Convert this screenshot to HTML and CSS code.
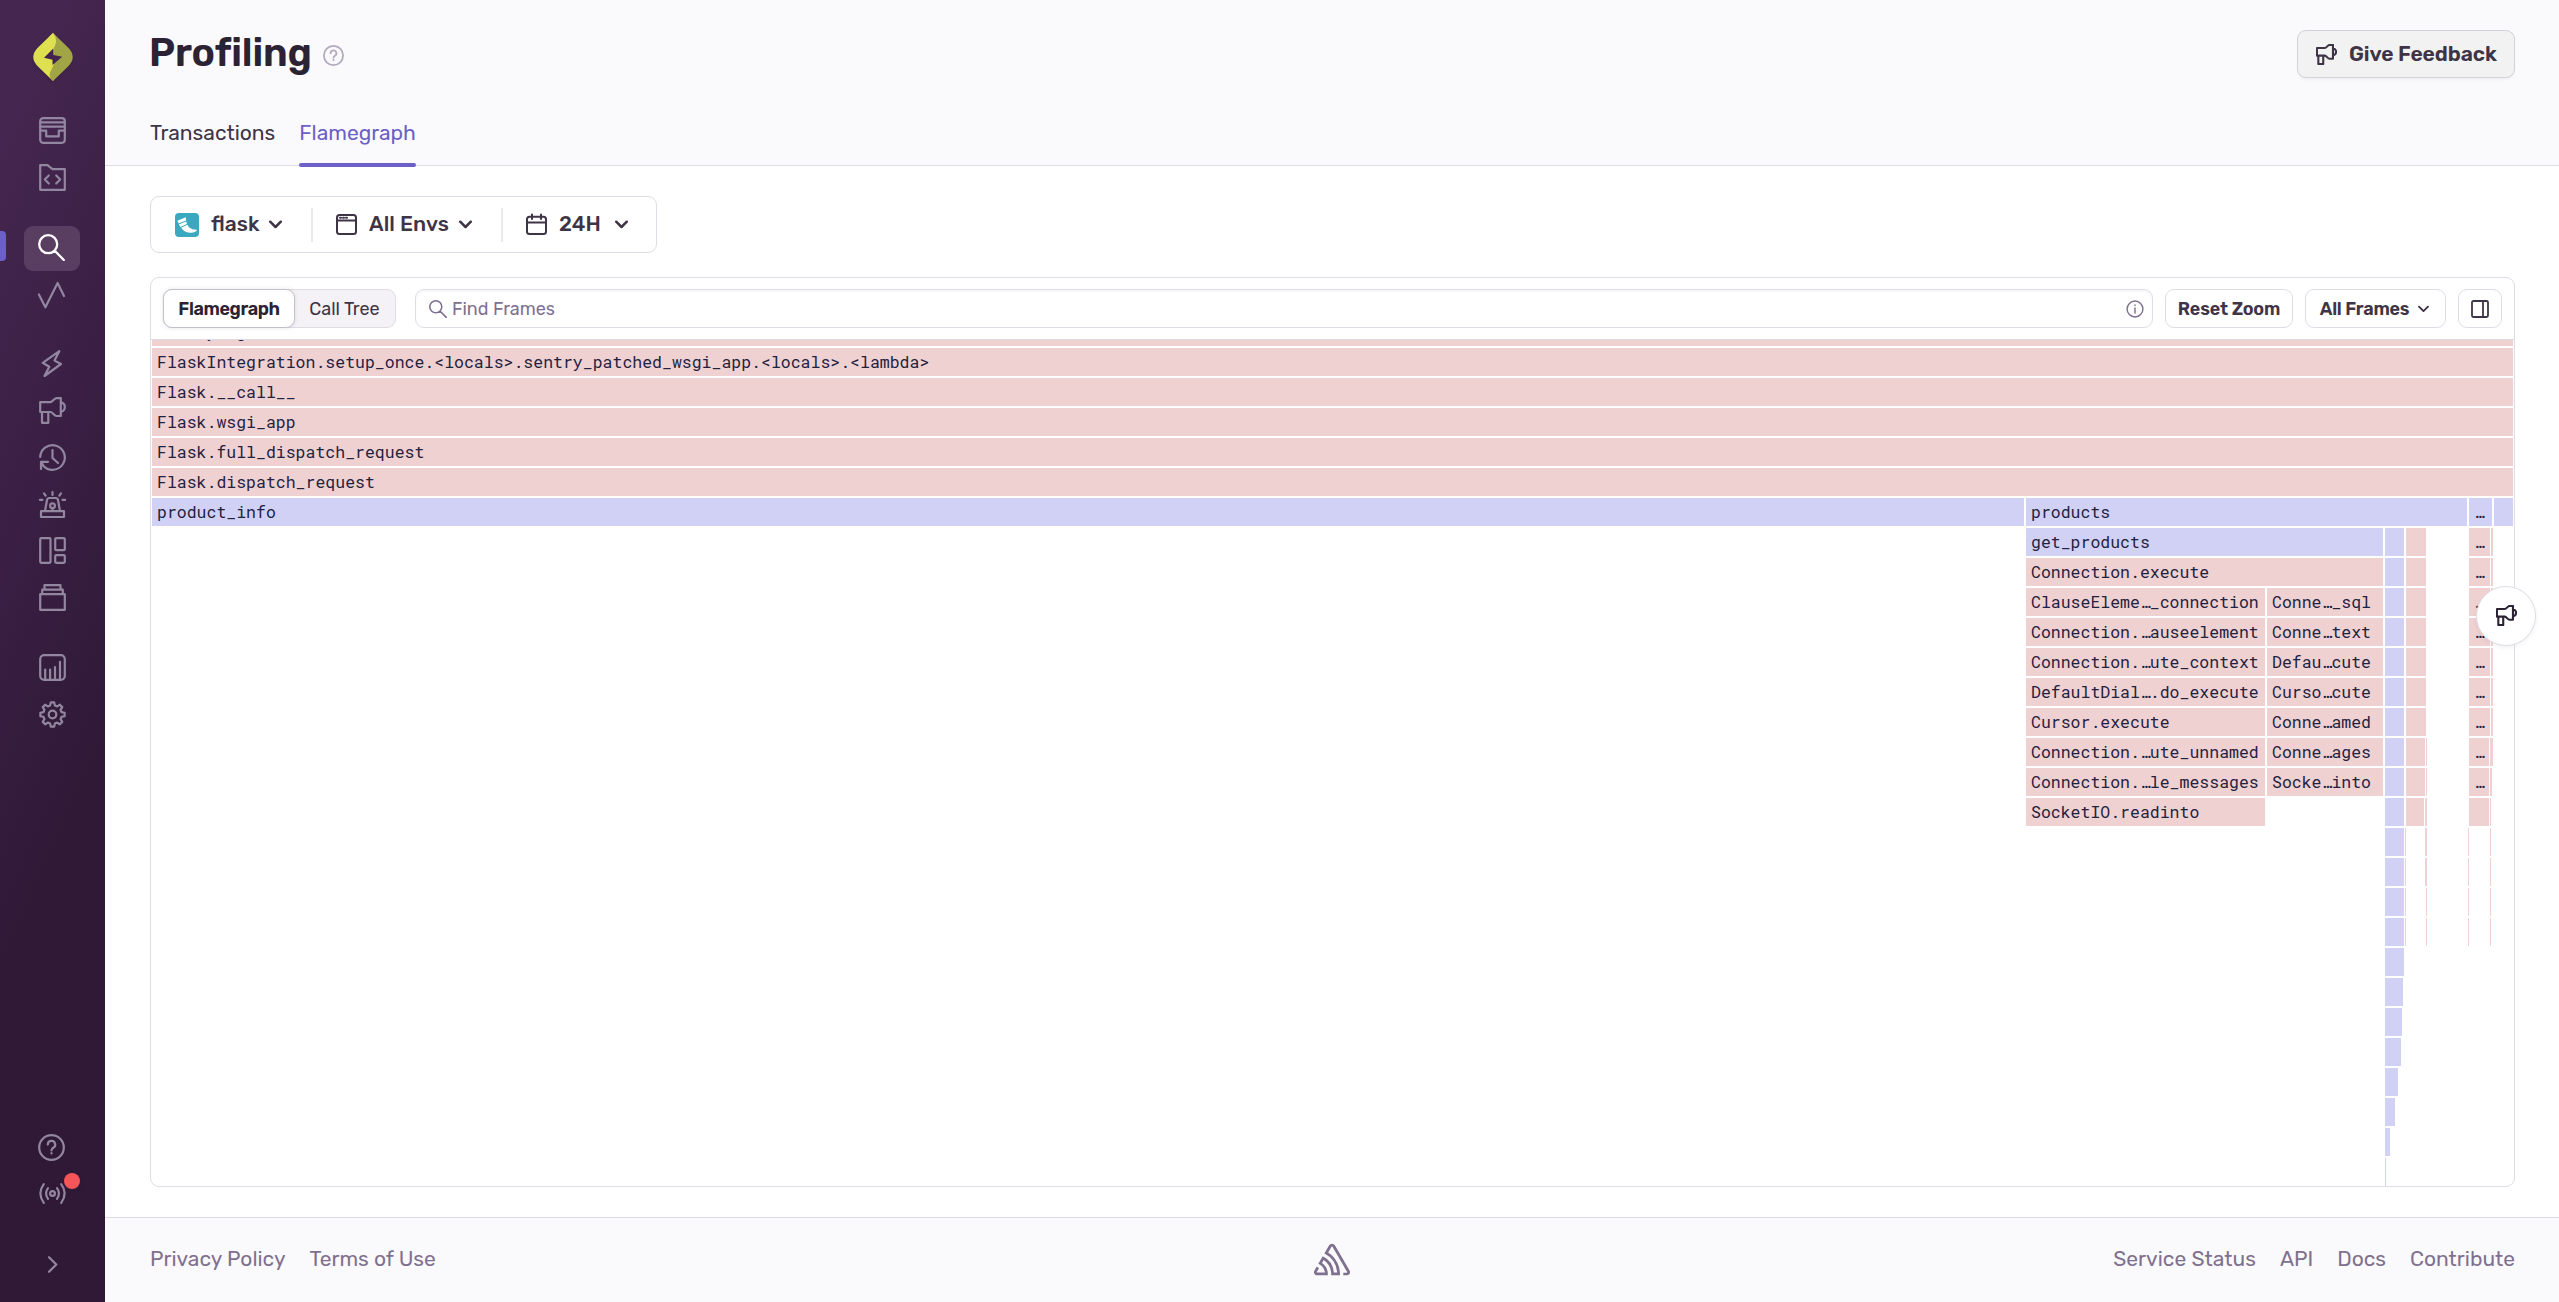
FILE: index.html
```html
<!DOCTYPE html>
<html lang="en">
<head>
<meta charset="utf-8">
<title>Profiling</title>
<link rel="stylesheet" href="styles.css">
</head>
<body>
<svg class="defs" aria-hidden="true">
  <symbol id="megaphone" viewBox="0 0 27 27"><path d="M1.2 5.2H11.5C13.5 5.2 15 1.2 17.5 1.2H21.8V19H17.5C15 19 13.5 15 11.5 15H1.2ZM3 15V25.8H9.3V15M22 5.4a4.8 4.8 0 0 1 0 9.4"/></symbol>
  <symbol id="search" viewBox="0 0 27 27"><path d="M19.2 10.2a9 9 0 1 1-18 0a9 9 0 0 1 18 0ZM16.8 16.8 25.8 26"/></symbol>
  <symbol id="question" viewBox="0 0 27 27"><circle cx="13.5" cy="13.5" r="12.3"/><path d="M9.8 10.6a3.7 3.7 0 1 1 5.5 3.2c-1.3.8-1.8 1.3-1.8 2.7M13.5 19.2v.3"/></symbol>
  <symbol id="chevron" viewBox="0 0 14 9"><path d="M1.3 1.5 7 7.2l5.700-5.700"/></symbol>
</svg>
<nav class="sidebar">
  <svg class="logo" viewBox="0 0 40 48"><path fill="#dfe04f" d="M20 0 6 13.500Q-5.500 24 6 34.500L20 48l2-4 8-10V12Z"/><path fill="#a1a546" d="M20 0 34 13.500Q45.500 24 34 34.500L20 48Q14 43 18.500 36.500L21 31 20 16Q25 10 20 0Z"/><path fill="#dfe04f" d="M20 0Q26 7 20 16L14 16 16 4Z"/><path fill="#42244d" d="M20 15.700 11 24.700 19.500 26.700V32L29.200 23.800 20.500 22Z"/></svg>
  <div class="group g1">
    <a class="item"><svg viewBox="0 0 27 27"><rect x="1.200" y="1.200" width="24.600" height="24.600" rx="3"/><path d="M1.200 5.400H25.800M1.200 9.700H25.800M1.200 13.700H7.200V19.400H19.800V13.700H25.800"/></svg></a>
    <a class="item"><svg viewBox="0 0 27 27"><path d="M1.200 1.200H8.500L13.500 5.200H25.800V25.800H1.200ZM9.800 11.500 5.800 15.500l4 4M17.200 11.500l4 4-4 4"/></svg></a>
  </div>
  <div class="group g2">
    <a class="item active"><svg><use href="#search"/></svg></a>
    <a class="item shifted"><svg viewBox="0 0 27 27"><path d="M.9 12.500 7.400 25.300 19.600 1 26 14"/></svg></a>
  </div>
  <div class="group g3">
    <a class="item"><svg viewBox="0 0 27 27"><path d="M20.300 1.200 3.700 12.800 10.300 16.700 5.500 26 22 14 15.500 10.600Z"/></svg></a>
    <a class="item"><svg><use href="#megaphone"/></svg></a>
    <a class="item"><svg viewBox="0 0 27 27"><path d="M1.200 13A12.300 12.300 0 1 1 4.500 21.900L2.200 18M9 17.800H2V25M13.500 6V14L19 19"/></svg></a>
    <a class="item"><svg viewBox="0 0 27 27"><path d="M2 20.200H25V26H2ZM6 20 8 9Q8.400 7 10.300 7H16.700Q18.600 7 19 9L21 20M13.500 1V4M5 2.300 6.600 4.600M22 2.300 20.400 4.600M.9 8.800H3.500M23.500 8.800H26.100M13.500 17.500V20"/><circle cx="13.500" cy="14.700" r="2.400"/></svg></a>
    <a class="item"><svg viewBox="0 0 27 27"><rect x="1.200" y="1.200" width="10.300" height="24.600" rx="1"/><rect x="16.200" y="1.200" width="9.600" height="12" rx="1"/><rect x="16.200" y="18.200" width="9.600" height="7.600" rx="1"/></svg></a>
    <a class="item"><svg viewBox="0 0 27 27"><path d="M1.200 10.200H25.800V25.800H1.200ZM3.200 10V5.700H23.800V10M5.500 5.500V1.200H21.500V5.500"/></svg></a>
  </div>
  <div class="group g4">
    <a class="item"><svg viewBox="0 0 27 27"><rect x="1.200" y="1.200" width="24.600" height="24.600" rx="4"/><path d="M6.200 15.500V25M11.100 15.500V25M16 13V25M21 7.800V25"/></svg></a>
    <a class="item"><svg viewBox="-13.500 -13.500 27 27"><path d="M-2.400-9-1.700-12.100 1.700-12.100 2.400-9 4.670-8.060 7.350-9.760 9.760-7.350 8.060-4.670 9-2.400 12.100-1.700 12.100 1.700 9 2.400 8.060 4.670 9.760 7.350 7.350 9.760 4.670 8.060 2.400 9 1.700 12.100-1.700 12.100-2.400 9-4.670 8.060-7.350 9.760-9.760 7.350-8.060 4.670-9 2.400-12.100 1.700-12.100-1.700-9-2.400-8.060-4.670-9.760-7.350-7.350-9.760-4.670-8.060Z"/><circle r="3.800"/></svg></a>
  </div>
  <div class="group bottom">
    <a class="item shifted"><svg><use href="#question"/></svg></a>
    <a class="item"><svg viewBox="0 -3 27 27"><circle cx="13.500" cy="10.500" r="2.400"/><path d="M9 5.200q-4 5.300 0 10.600M18 5.200q4 5.300 0 10.600M4.800 1.200q-7 9.300 0 18.600M22.200 1.200q7 9.300 0 18.600"/></svg><i class="dot"></i></a>
    <a class="item collapse"><svg viewBox="0 0 27 27"><path d="M10 6.200 17.300 13.500 10 20.800"/></svg></a>
  </div>
</nav>
<div class="main">
  <header>
    <div class="titlebar">
      <h1>Profiling</h1>
      <svg class="hint"><use href="#question"/></svg>
      <button class="feedback"><svg><use href="#megaphone"/></svg><span>Give Feedback</span></button>
    </div>
    <div class="tabs"><a>Transactions</a><a class="on">Flamegraph</a></div>
  </header>
  <main>
    <div class="filters">
      <div class="filter f1"><svg class="flask" viewBox="0 0 24 24"><rect width="24" height="24" rx="4" fill="#3aa9c0"/><path fill="#fff" d="M2.300 7.800 10.800 4.300Q11 11 14 14.300 17 17 22.200 16.800 20.500 19.800 16 19.800 11 20 7.500 16.500 4.500 13.500 2.300 7.800Z"/><path stroke="#3aa9c0" d="M3 11.200 12 7.700M5 14.700 13 11"/></svg><span>flask</span><svg class="chev"><use href="#chevron"/></svg></div>
      <div class="filter f2"><svg class="ic" viewBox="0 0 21 21"><rect x="1" y="1" width="19" height="19" rx="2.500"/><path d="M1 6.400H20M4 3.800H5M7 3.800H8M10 3.800H11"/></svg><span>All Envs</span><svg class="chev"><use href="#chevron"/></svg></div>
      <div class="filter f3"><svg class="ic" viewBox="0 0 21 21"><rect x="1" y="2.800" width="19" height="17.200" rx="2.500"/><path d="M1 8.500H20M6 .5V5M15 .5V5"/></svg><span>24H</span><svg class="chev"><use href="#chevron"/></svg></div>
    </div>
    <section class="panel">
      <div class="toolbar">
        <div class="segmented"><b>Flamegraph</b><span>Call Tree</span></div>
        <div class="find"><svg><use href="#search"/></svg><span>Find Frames</span><svg class="info" viewBox="0 0 20 20"><circle cx="10" cy="10" r="8.800"/><path d="M10 8.800V14.500M10 5.600V6.200"/></svg></div>
        <button class="reset">Reset Zoom</button>
        <button class="frames">All Frames<svg><use href="#chevron"/></svg></button>
        <button class="layout"><svg viewBox="0 0 18 18"><rect x="1" y="1" width="16" height="16" rx="1.500"/><path d="M12 1V17"/></svg></button>
      </div>
      <div class="graph" id="graph"></div>
    </section>
  </main>
  <footer>
    <div class="links"><a>Privacy Policy</a><a>Terms of Use</a></div>
    <svg class="glyph" viewBox="0 0 50 44"><path d="M29,2.260a4.670,4.670,0,0,0-8,0L14.420,13.530A32.210,32.210,0,0,1,32.170,40.190H27.550A27.680,27.680,0,0,0,12.090,17.470L6,28a15.920,15.920,0,0,1,9.230,12.170H4.620A.76.76,0,0,1,4,39.060l2.940-5a10.740,10.740,0,0,0-3.360-1.900l-2.910,5a4.540,4.540,0,0,0,1.690,6.240A4.660,4.660,0,0,0,4.620,44H19.150a19.400,19.400,0,0,0-8-17.310l2.310-4A23.870,23.870,0,0,1,23.760,44H36.070a35.880,35.880,0,0,0-16.410-31.800l4.670-8a.77.77,0,0,1,1.050-.27c.53.29,20.290,34.770,20.660,35.170a.76.76,0,0,1-.68,1.130H40.600q.09,1.910,0,3.810h4.780A4.590,4.590,0,0,0,50,39.430a4.490,4.490,0,0,0-.62-2.280Z"/></svg>
    <div class="links right"><a>Service Status</a><a>API</a><a>Docs</a><a>Contribute</a></div>
  </footer>
</div>
<button class="floating"><svg><use href="#megaphone"/></svg></button>
<script src="graph.js"></script>
</body>
</html>
```
FILE: styles.css
```css
* { box-sizing: border-box; }
body {
  margin: 0;
  height: 1302px;
  display: flex;
  overflow: hidden;
  background: #fff;
  color: #3e3446;
  font: 400 21px/28px Rubik, Roboto, sans-serif;
}
svg { fill: none; stroke: currentColor; stroke-width: 2.2; stroke-linecap: round; stroke-linejoin: round; flex: none; display: block; overflow: visible; }
.defs { position: absolute; width: 0; height: 0; }
button { font: inherit; color: inherit; background: #fff; border: 1px solid #e0dce5; border-radius: 9px; padding: 0; display: flex; align-items: center; }

.sidebar {
  width: 105px;
  flex: none;
  display: flex;
  flex-direction: column;
  align-items: center;
  padding-top: 33px;
  color: #9386a0;
  background: linear-gradient(294.17deg, #2f1937 35.57%, #452650 92.42%);
}
.logo { width: 40px; height: 48px; stroke: none; margin-left: 1px; filter: drop-shadow(0 2px 1px rgba(47,25,55,.3)); }
.group { width: 105px; display: flex; flex-direction: column; align-items: center; gap: 1.700px; }
.g1 { margin-top: 27px; }
.g2 { margin-top: 26.300px; }
.g3 { margin-top: 23.800px; }
.g4 { margin-top: 25px; }
.item { width: 56px; height: 45px; display: flex; align-items: center; justify-content: center; position: relative; }
.item svg { width: 27px; height: 27px; }
.item.shifted svg { margin-left: -2px; }
.item.active { background: #5a3e62; border-radius: 9px; color: #fff; margin-left: -1px; }
.item.active svg { margin: -2px 0 0 -1px; stroke-width: 2.300; }
.item.active::before { content: ""; position: absolute; left: -24px; top: 5px; width: 6px; height: 30px; border-radius: 0 4px 4px 0; background: #6c5fc7; }
.bottom { margin-top: auto; padding-bottom: 15px; }
.dot { position: absolute; left: 39px; top: 2px; width: 16px; height: 16px; border-radius: 50%; background: #f55459; box-shadow: 0 2px 4px rgba(43,34,51,.3); }
.collapse { margin-top: 24px; }

.main { flex: 1; min-width: 0; display: flex; flex-direction: column; }
header { height: 166px; background: #fafafc; border-bottom: 1px solid #dddce4; padding: 30px 44px 0 45px; display: flex; flex-direction: column; justify-content: space-between; }
.titlebar { display: flex; align-items: flex-start; }
h1 { margin: 0 0 0 -1px; color: #2b2233; font-size: 39px; line-height: 46px; font-weight: 600; letter-spacing: -.1px; }
.hint { width: 21px; height: 21px; margin: 15px 0 0 11px; color: #b4a9bf; stroke-width: 2.300; }
.feedback { margin-left: auto; width: 218px; height: 48px; padding-left: 18px; background: #f2f2f2; border-color: #d3d0d8; box-shadow: 0 2px 2px rgba(43,34,51,.04); font-weight: 600; letter-spacing: -.1px; }
.feedback span { padding-bottom: 1px; }
.feedback svg { width: 21px; height: 21px; margin-right: 12px; stroke-width: 2.700; }
.tabs { display: flex; gap: 24px; }
.tabs a { height: 49px; padding-top: 3px; position: relative; }
.tabs .on { color: #6c5fc7; }
.tabs .on::after { content: ""; position: absolute; left: 0; right: 0; bottom: -2px; height: 4px; border-radius: 2px; background: #6c5fc7; }

main { flex: 1; padding: 30px 44px 30px 45px; display: flex; flex-direction: column; align-items: stretch; }
.filters { align-self: flex-start; width: 507px; height: 57px; border: 1px solid #e0dce5; border-radius: 9px; display: flex; align-items: center; font-weight: 500; }
.filter { display: flex; align-items: center; height: 34px; }
.filter span { padding-bottom: 1px; }
.filter + .filter { border-left: 2px solid #ebe8f0; padding-left: 23px; }
.f1 { width: 160px; padding-left: 24px; }
.f2 { width: 190px; }
.f2 span { letter-spacing: .1px; }
.flask { width: 24px; height: 24px; margin-right: 12px; stroke: none; }
.flask path[stroke] { stroke-width: 1; }
.ic { width: 21px; height: 21px; margin-right: 12px; stroke-width: 2; }
.chev { width: 13px; height: 9px; margin: 0 0 0 10px; stroke-width: 2.700; }
.f3 .chev { margin-left: 14px; }

.panel { margin-top: 24px; height: 910px; border: 1px solid #e0dce5; border-radius: 9px; overflow: hidden; display: flex; flex-direction: column; }
.toolbar { height: 62px; flex: none; padding: 0 12px; border-bottom: 1px solid #e0dce5; display: flex; align-items: center; font-size: 18px; line-height: 24px; }
.toolbar > * { height: 39px; }
.segmented { width: 233px; display: flex; background: #f4f2f7; border: 1px solid #e0dce5; border-radius: 9px; }
.segmented b { width: 132px; margin: -1px; height: 39px; line-height: 39px; text-align: center; background: #fff; color: #2b2233; border: 1px solid #c4bfcb; border-radius: 9px; font-weight: 600; letter-spacing: -.4px; box-shadow: 0 0 4px rgba(43,34,51,.12); }
.segmented span { flex: 1; text-align: center; line-height: 39px; }
.find { flex: 1; margin-left: 19px; border: 1px solid #e0dce5; border-radius: 9px; display: flex; align-items: center; padding: 0 8px 0 13px; color: #80708f; box-shadow: inset 0 2px 2px rgba(43,34,51,.04); }
.find > svg { width: 18px; height: 18px; margin-right: 5px; stroke-width: 2.400; }
.find > .info { width: 18px; height: 18px; margin: 0 0 0 auto; stroke-width: 1.600; }
.toolbar button { justify-content: center; font-weight: 600; }
.reset { width: 128px; margin-left: 12px; letter-spacing: -.2px; }
.frames { width: 141px; margin-left: 12px; letter-spacing: -.25px; }
.frames svg { width: 11px; height: 8px; margin: 1px 2px 0 9px; stroke-width: 2.400; }
.layout { width: 44px; margin-left: 12px; margin-right: 0; }
.layout svg { width: 18px; height: 18px; stroke-width: 1.800; }

.graph { flex: 1; overflow: hidden; padding-left: 1px; font: 16.500px/27px "Roboto Mono", "DejaVu Sans Mono", monospace; color: #1f2240; }
.row { display: flex; height: 28px; margin-bottom: 2px; }
.row:first-child { margin-top: -22px; }
.frame { flex: none; height: 28px; padding-left: 5px; white-space: pre; }
.frame.thin { padding: 0; }
.lib { background: #efd1d1; }
.app { background: #d1d1f5; }
.frame.dots { padding-left: 5px; }

footer { height: 85px; background: #fafafc; border-top: 1px solid #dddce4; padding: 0 44px 0 45px; display: grid; grid-template-columns: 1fr auto 1fr; align-items: center; color: #80708f; }
.links { display: flex; gap: 24px; padding-bottom: 2px; }
.links a:first-child { letter-spacing: .02px; }
.right { justify-content: flex-end; }
.glyph { width: 36px; height: 33px; fill: #80708f; stroke: none; margin: 0 1px 1px 0; }

.floating { position: absolute; left: 2476px; top: 586px; width: 60px; height: 60px; border-radius: 50%; justify-content: center; color: #2b2233; box-shadow: 0 2px 4px rgba(43,34,51,.06); }
.floating svg { width: 21px; height: 21px; margin-left: 1px; margin-top: -1px; stroke-width: 2.700; }
```
FILE: graph.js
```js
// Each frame: [start, end, kind, label]; positions are canvas pixels.
const W = 2361;
const tail = [[2233, 2252, 'app'], [2254, 2274, 'lib']];
const call = (a, b, cols, end) => {
  const row = b ? [[1874, 2113, 'lib', a], [2115, 2231, 'lib', b]] : [[1874, 2113, 'lib', a]];
  return row.concat(cols || tail, end || [[2317, 2338, 'lib', '…'], [2339, 2341, 'lib']]);
};
const split = [[2233, 2252, 'app'], [2254, 2273, 'lib'], [2274, 2275, 'lib']];
const slim = s => [[2233, 2252, 'app'], [2253, 2254, 'lib'], [s, 2275, 'lib'], [2316, 2317, 'lib'], [2338, 2339, 'lib']];
const rows = [
  [[0, W, 'lib', 'SentryWsgiMiddleware']],
  [[0, W, 'lib', 'FlaskIntegration.setup_once.<locals>.sentry_patched_wsgi_app.<locals>.<lambda>']],
  [[0, W, 'lib', 'Flask.__call__']],
  [[0, W, 'lib', 'Flask.wsgi_app']],
  [[0, W, 'lib', 'Flask.full_dispatch_request']],
  [[0, W, 'lib', 'Flask.dispatch_request']],
  [[0, 1872, 'app', 'product_info'], [1874, 2315, 'app', 'products'], [2317, 2340, 'app', '…'], [2342, W, 'app']],
  [[1874, 2231, 'app', 'get_products'], ...tail, [2317, 2338, 'lib', '…'], [2339, 2340, 'app'], [2340, 2341, 'lib']],
  [[1874, 2231, 'lib', 'Connection.execute'], ...tail, [2317, 2338, 'lib', '…'], [2339, 2341, 'lib']],
  call('ClauseEleme…_connection', 'Conne…_sql'),
  call('Connection.…auseelement', 'Conne…text'),
  call('Connection.…ute_context', 'Defau…cute'),
  call('DefaultDial….do_execute', 'Curso…cute'),
  call('Cursor.execute', 'Conne…amed'),
  call('Connection.…ute_unnamed', 'Conne…ages', split, [[2317, 2337, 'lib', '…'], [2338, 2341, 'lib']]),
  call('Connection.…le_messages', 'Socke…into', split, [[2317, 2337, 'lib', '…'], [2338, 2340, 'lib']]),
  call('SocketIO.readinto', null, [[2233, 2252, 'app'], [2254, 2272, 'lib'], [2273, 2275, 'lib']], [[2317, 2337, 'lib'], [2338, 2339, 'lib']]),
  slim(2273), slim(2273), slim(2274), slim(2274),
  ...[2252, 2251, 2250, 2249, 2246, 2243, 2238, 2234].map(end => [[2233, end, 'app']])
];
const graph = document.getElementById('graph');
for (const row of rows) {
  const line = document.createElement('div');
  line.className = 'row';
  let x = 0;
  row.sort((p, q) => p[0] - q[0]);
  for (const [start, end, kind, label] of row) {
    const frame = document.createElement('div');
    frame.className = 'frame ' + kind + (label ? label === '…' ? ' dots' : '' : ' thin');
    frame.style.marginLeft = start - x + 'px';
    frame.style.width = end - start + 'px';
    frame.textContent = label || '';
    line.append(frame);
    x = end;
  }
  graph.append(line);
}
```
